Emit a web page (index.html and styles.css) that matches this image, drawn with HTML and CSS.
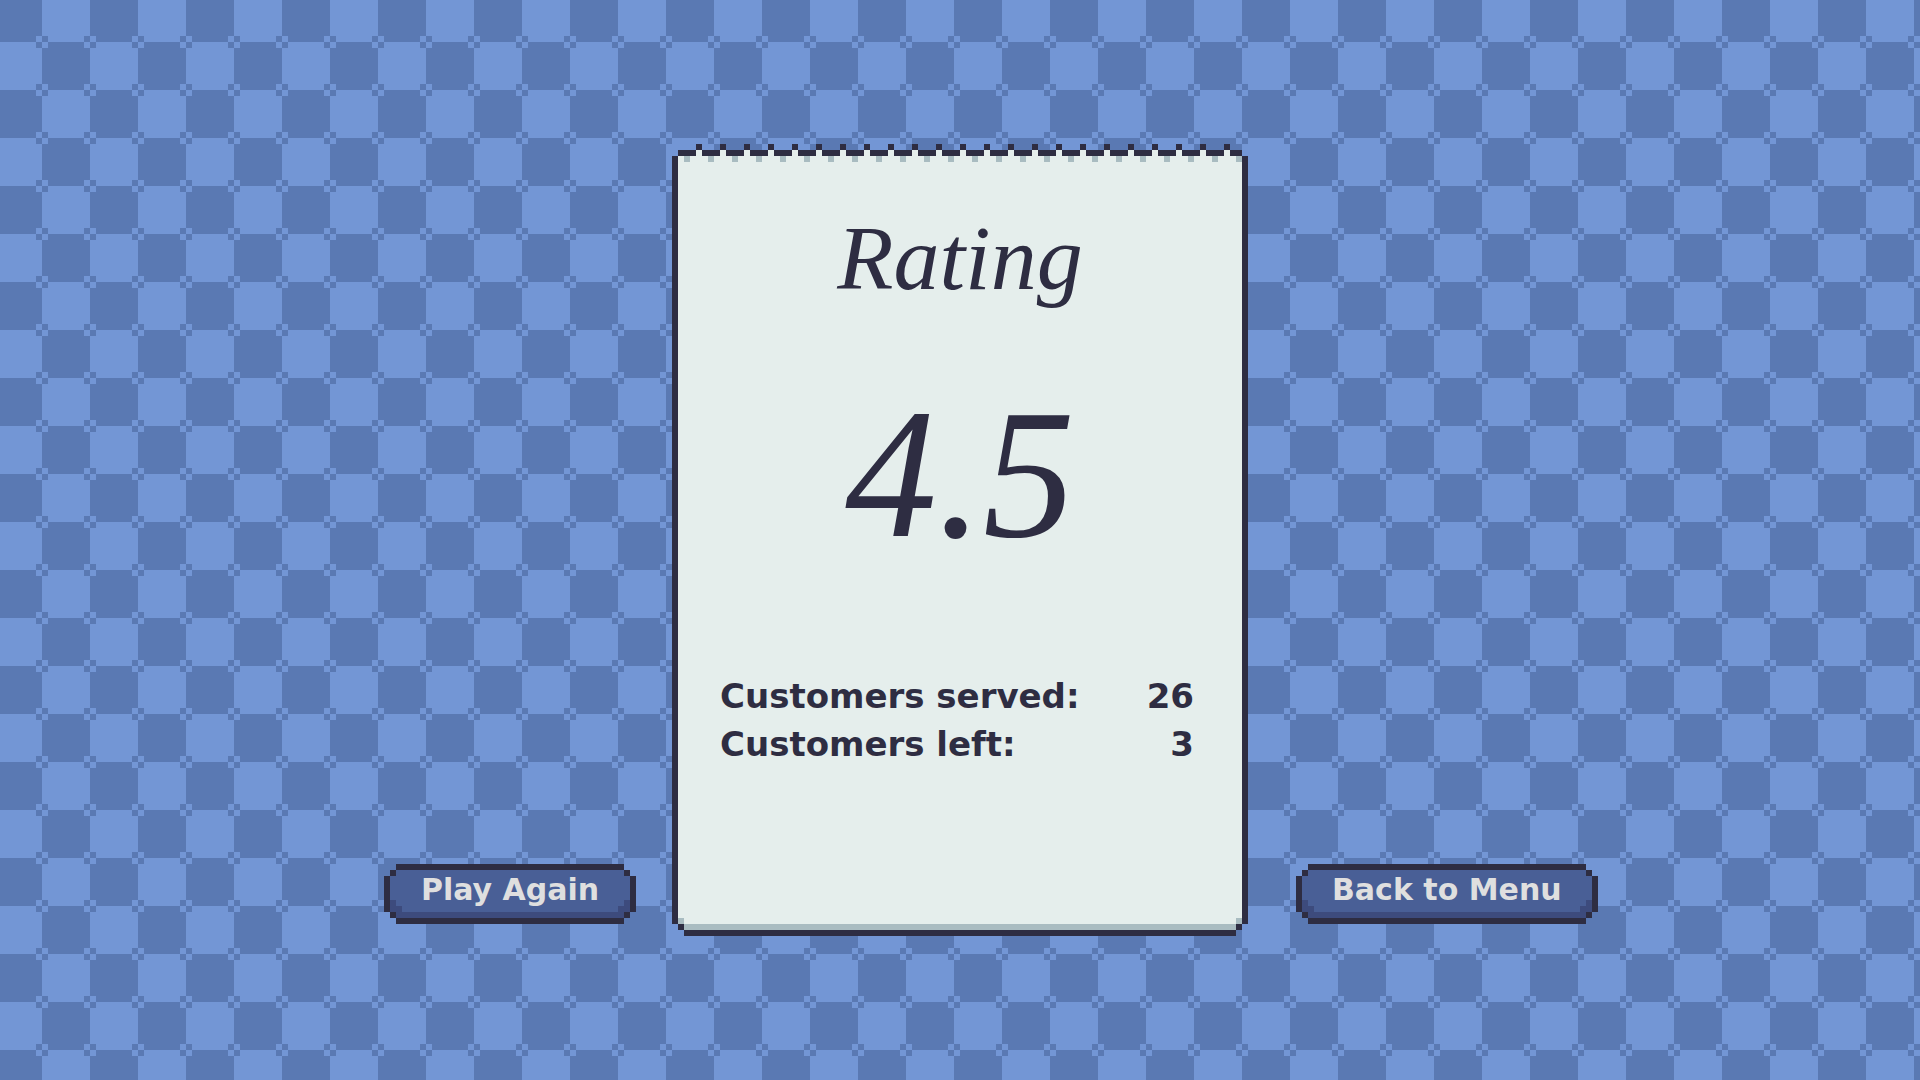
FILE: index.html
```
<!DOCTYPE html>
<html lang="en">
    <head>
        <meta charset="utf-8">
        <title>Rating</title>
        <link rel="stylesheet" href="styles.css">
    </head>
    <body>
        <main class="results">
            <button type="button" class="button again">Play Again</button>

            <section class="receipt">
                <div class="receipt_edge"></div>
                <div class="receipt_body">
                    <h1 class="title">Rating</h1>
                    <p class="rating">4.5</p>
                    <table class="stats">
                        <tr>
                            <th scope="row">Customers served:</th>
                            <td>26</td>
                        </tr>
                        <tr>
                            <th scope="row">Customers left:</th>
                            <td>3</td>
                        </tr>
                    </table>
                </div>
            </section>

            <button type="button" class="button menu">Back to Menu</button>
        </main>
    </body>
</html>
```

FILE: styles.css
```
* {
    box-sizing: border-box;
}
body {
    margin: 0;
    font-family: "DejaVu Sans", sans-serif;
    font-weight: bold;
    color: #2e2d42;
    background-color: #7396d5;
    /* checkerboard with inverted corners, 6px per pixel */
    background-image: url("data:image/svg+xml,%3Csvg xmlns='http://www.w3.org/2000/svg' width='96' height='96' viewBox='0 0 16 16' shape-rendering='crispEdges'%3E%3Cpath fill='%237396d5' d='M0 0h16v16H0z'/%3E%3Cpath fill='%235a79b3' d='M0 0h8v8H0zM8 8h8v8H8z'/%3E%3Cpath fill='%237396d5' d='M0 0h1v1H0zM15 15h1v1h-1zM7 7h1v1H7zM8 8h1v1H8zM8 15h1v1H8zM7 0h1v1H7zM0 7h1v1H0zM15 8h1v1h-1z'/%3E%3Cpath fill='%235a79b3' d='M0 15h1v1H0zM15 0h1v1h-1zM8 7h1v1H8zM7 8h1v1H7zM7 15h1v1H7zM8 0h1v1H8zM15 7h1v1h-1zM0 8h1v1H0z'/%3E%3C/svg%3E");
    background-position: -6px -6px;
}
.results {
    min-height: 100vh;
    display: grid;
    grid-template-columns: 1fr 30% 1fr;
    align-content: center;
    align-items: end;
}

/* receipt */
.receipt {
    display: flex;
    flex-direction: column;
    min-height: 792px;
}
.receipt_edge {
    height: 12px;
    margin: 0 6px;
    background: url("data:image/svg+xml,%3Csvg xmlns='http://www.w3.org/2000/svg' width='24' height='12' viewBox='0 0 4 2' shape-rendering='crispEdges'%3E%3Cpath fill='%232e2d42' d='M0 1h3v1H0zM3 0h1v1H3z'/%3E%3Cpath fill='%23e5eeec' d='M3 1h1v1H3z'/%3E%3C/svg%3E") repeat-x;
}
.receipt_body {
    flex: 1;
    padding: 0 30px;
    border: 18px solid transparent;
    border-top-width: 6px;
    border-image: url("data:image/svg+xml,%3Csvg xmlns='http://www.w3.org/2000/svg' width='60' height='60' viewBox='0 0 10 10' shape-rendering='crispEdges'%3E%3Cpath fill='%23e5eeec' d='M1 0h8v8H1z'/%3E%3Cpath fill='%23a9bcc1' d='M1 7h1v1h6V7h1v1H8v1H2V8H1z'/%3E%3Cpath fill='%232e2d42' d='M0 0h1v8H0zM9 0h1v8H9zM1 8h1v1H1zM8 8h1v1H8zM2 9h6v1H2z'/%3E%3C/svg%3E") 6 18 18 18 fill;
    position: relative;
}
.receipt_body::before {
    content: "";
    position: absolute;
    top: -6px;
    left: -12px;
    right: -12px;
    height: 6px;
    background: repeating-linear-gradient(90deg, transparent 0 6px, #a9bcc1 6px 12px, transparent 12px 24px);
}
.title {
    margin: 42px 0 0;
    font: italic 92px/108px "Liberation Serif", serif;
    text-align: center;
}
.rating {
    margin: 66px 0 0;
    font: italic 184px/192px "Liberation Serif", serif;
    text-align: center;
}
.stats {
    width: 100%;
    margin-top: 102px;
    border-collapse: collapse;
    font-size: 34px;
    line-height: 48px;
}
.stats th,
.stats td {
    padding: 0;
}
.stats th {
    text-align: left;
}
.stats td {
    padding-right: 6px;
    text-align: right;
}

/* buttons */
.button {
    min-width: 252px;
    height: 60px;
    padding: 0 12px 8px;
    border: 24px solid transparent;
    border-width: 0 24px;
    border-image: url("data:image/svg+xml,%3Csvg xmlns='http://www.w3.org/2000/svg' width='60' height='60' viewBox='0 0 10 10' shape-rendering='crispEdges'%3E%3Cpath fill='%23495f96' d='M2 1h6v1h1v6H8v1H2V8H1V2h1z'/%3E%3Cpath fill='%233d4b7d' d='M1 6h1v1h1v1h4V7h1V6h1v2H8v1H2V8H1z'/%3E%3Cpath fill='%232e2d42' d='M2 0h6v1H2zM1 1h1v1H1zM8 1h1v1H8zM0 2h1v6H0zM9 2h1v6H9zM1 8h1v1H1zM8 8h1v1H8zM2 9h6v1H2z'/%3E%3C/svg%3E") 0 24 fill;
    background: none;
    color: #dfdfdf;
    font: bold 30px/48px "DejaVu Sans", sans-serif;
    white-space: nowrap;
    cursor: pointer;
}
.again {
    justify-self: end;
    margin: 0 36px 12px 0;
}
.menu {
    justify-self: start;
    margin: 0 0 12px 48px;
}
```
